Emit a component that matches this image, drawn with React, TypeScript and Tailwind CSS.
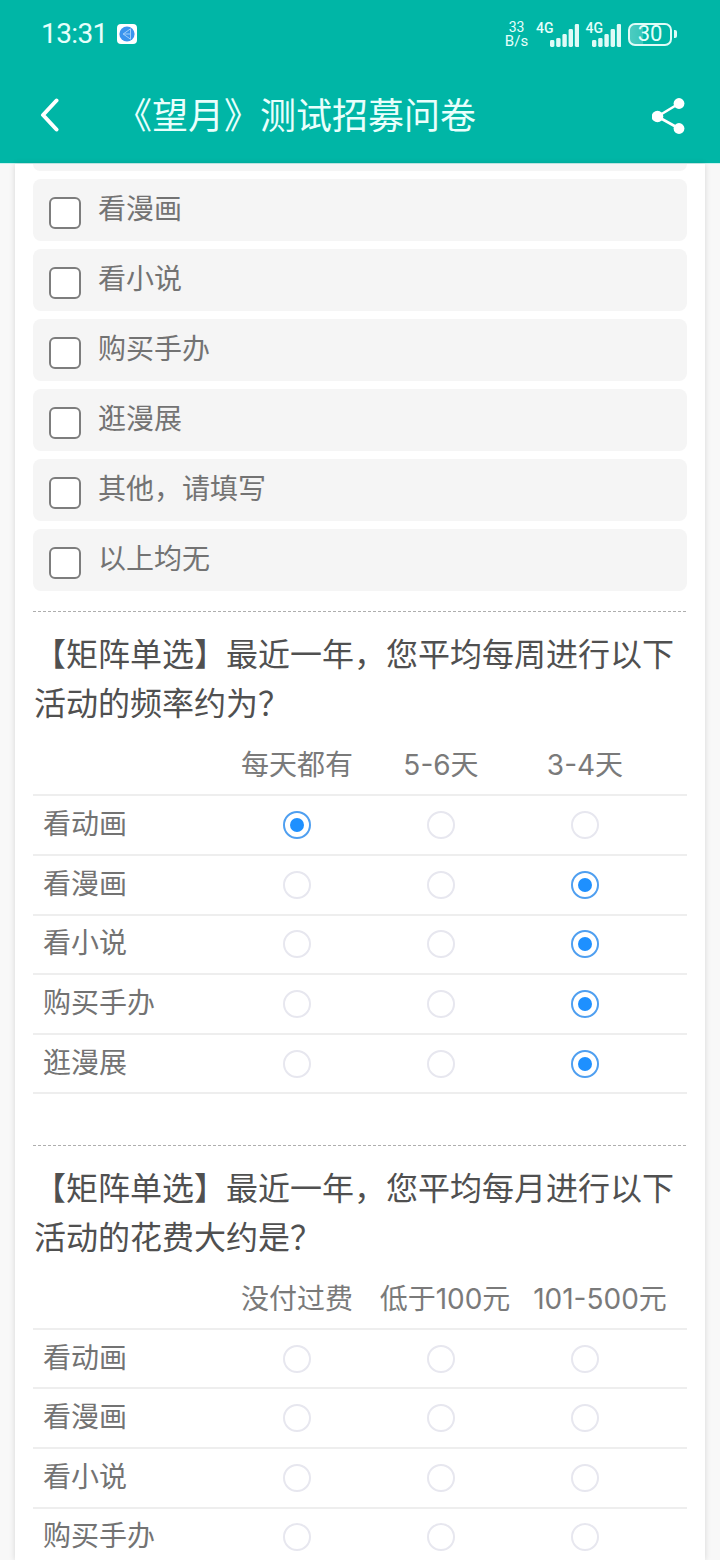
// App.tsx
const fontStack = "font-['Inter','Noto_Sans_CJK_SC','Noto_Sans',sans-serif]";

const options = ["看漫画", "看小说", "购买手办", "逛漫展", "其他，请填写", "以上均无"];

type Head = { text: string; className: string };

const weekHeads: Head[] = [
  { text: "每天都有", className: "col-start-2" },
  { text: "5-6天", className: "col-start-3" },
  { text: "3-4天", className: "col-start-4" },
];

const moneyHeads: Head[] = [
  { text: "没付过费", className: "col-start-2" },
  { text: "低于100元", className: "col-start-3 pl-[4px] -mr-[4px]" },
  { text: "101-500元", className: "col-start-4 col-span-2" },
];

function Signal() {
  const bars = [7, 9, 13, 18, 23];
  return (
    <svg width="29" height="23" viewBox="0 0 29 23" fill="#dffbf7">
      {bars.map((h, i) => (
        <rect key={i} x={i * 6.2} y={23 - h} width="4.4" height={h} rx="1.4" />
      ))}
    </svg>
  );
}

function AppDot() {
  return (
    <svg width="20" height="20" viewBox="0 0 20 20" className="ml-[9px]">
      <rect width="20" height="20" rx="4" fill="white" />
      <circle cx="10" cy="10" r="7.6" fill="#3b94ee" />
      <path d="M13.5 4.8 6.2 10l7.3 5.2zM6.2 10h7.3" fill="none" stroke="#a9d4fb" strokeWidth="0.9" />
    </svg>
  );
}

function StatusBar() {
  return (
    <div className="h-[68px] flex items-center pl-[41px] pr-[43px] text-[#e6fffb] font-['Roboto',sans-serif]">
      <span className="text-[28px] leading-none tracking-[-0.6px]">13:31</span>
      <AppDot />
      <div className="ml-auto flex items-center">
        <div className="w-[23px] flex flex-col items-center">
          <span className="text-[14px] leading-[14px]">33</span>
          <span className="text-[15px] leading-[14px]">B/s</span>
        </div>
        <div className="ml-[8px] flex items-end">
          <span className="text-[14px] leading-[14px] font-medium mb-[12px]">4G</span>
          <div className="-ml-[4px]">
            <Signal />
          </div>
        </div>
        <div className="ml-[7px] flex items-end">
          <span className="text-[14px] leading-[14px] font-medium mb-[12px]">4G</span>
          <div className="-ml-[11px]">
            <Signal />
          </div>
        </div>
        <div className="ml-[7px] w-[44px] h-[23px] rounded-[7px] border-2 border-[#dffbf7] flex items-center justify-center overflow-hidden bg-[linear-gradient(90deg,rgba(255,255,255,0.3)_0%,rgba(255,255,255,0.22)_32%,transparent_34%)]">
          <span className="text-[22px] leading-none">30</span>
        </div>
        <div className="ml-[2px] w-[3px] h-[8px] rounded-r-[2px] bg-[#dffbf7]" />
      </div>
    </div>
  );
}

function NavBar() {
  return (
    <div className="h-[95px] flex items-center">
      <svg className="ml-[40px] shrink-0 -mt-[1px]" width="19" height="34" viewBox="0 0 19 34" fill="none">
        <path d="M16.5 2.5 3 17l13.5 14.5" stroke="white" strokeWidth="4" strokeLinecap="round" strokeLinejoin="round" />
      </svg>
      <h1 className="ml-[57px] text-[36px] leading-none font-normal text-[#e9fffc]">《望月》测试招募问卷</h1>
      <svg className="ml-auto mr-[34px]" width="34" height="36" viewBox="0 0 34 36" fill="white">
        <circle cx="27" cy="5.5" r="5.4" />
        <circle cx="5.5" cy="18.5" r="5.8" />
        <circle cx="27" cy="30.5" r="5.4" />
        <path d="M5.5 18.5 27 5.5M5.5 18.5 27 30.5" stroke="white" strokeWidth="2.6" fill="none" />
      </svg>
    </div>
  );
}

function OptionRow({ label }: { label: string }) {
  return (
    <div className="h-[62px] rounded-[8px] bg-[#f5f5f5] flex items-center pl-[16px] gap-[17px]">
      <div className="w-[32px] h-[32px] mt-[5px] rounded-[6px] border-2 border-[#7d7d7d] bg-white" />
      <span className="text-[28px] leading-none text-[#737373] -mt-[3px]">{label}</span>
    </div>
  );
}

function Radio({ checked }: { checked?: boolean }) {
  if (checked) {
    return (
      <div className="w-[28px] h-[28px] rounded-full border-2 border-[#4f9ff0] bg-white flex items-center justify-center">
        <div className="w-[14px] h-[14px] rounded-full bg-[#1e90ff]" />
      </div>
    );
  }
  return <div className="w-[28px] h-[28px] rounded-full border-2 border-[#e7e7ef] bg-white" />;
}

function Matrix({
  title,
  heads,
  headHeight,
  rows,
}: {
  title: string;
  heads: Head[];
  headHeight: string;
  rows: { label: string; pick: number }[];
}) {
  return (
    <div>
      {/* dashed divider */}
      <div className="h-px bg-[repeating-linear-gradient(90deg,#aeaeae_0_3px,transparent_3px_5px)]" />
      <p className="pt-[18px] pr-[2px] pl-[1px] text-[32px] leading-[49px] text-[#505050]">{title}</p>
      <div className="mt-[7px]">
        <div className={`grid grid-cols-[192px_144px_144px_144px_30px] ${headHeight} items-center border-b-2 border-[#eeeeee]`}>
          {heads.map((h) => (
            <span key={h.text} className={`${h.className} row-start-1 text-center text-[28px] leading-none text-[#7a7a7a] whitespace-nowrap`}>
              {h.text}
            </span>
          ))}
        </div>
        {rows.map((r) => (
          <div
            key={r.label}
            className="grid grid-cols-[192px_144px_144px_144px_30px] h-[59.6px] items-center border-b-2 border-[#eeeeee]"
          >
            <span className="pl-[10px] text-[28px] leading-none text-[#737373] -mt-[2px]">{r.label}</span>
            {[0, 1, 2].map((i) => (
              <div key={i} className="flex justify-center">
                <Radio checked={r.pick === i} />
              </div>
            ))}
          </div>
        ))}
      </div>
    </div>
  );
}

export default function App() {
  return (
    <div className={`w-[720px] h-[1560px] overflow-hidden flex flex-col bg-[#f8f8f8] ${fontStack}`}>
      <header className="bg-[#00b6a6] shrink-0">
        <StatusBar />
        <NavBar />
      </header>
      <div className="h-px bg-[#c9f1ee] shrink-0" />

      <main className="flex-1 overflow-hidden mx-[15px] bg-white shadow-[0_0_6px_rgba(0,0,0,0.14)] px-[18px]">
        {/* option cut off by the header */}
        <div className="h-[7px] rounded-b-[8px] bg-[#f5f5f5]" />

        <div className="mt-[8px] flex flex-col gap-[8px]">
          {options.map((o) => (
            <OptionRow key={o} label={o} />
          ))}
        </div>

        <div className="mt-[20px]">
          <Matrix
            title="【矩阵单选】最近一年，您平均每周进行以下活动的频率约为？"
            heads={weekHeads}
            headHeight="h-[61.4px]"
            rows={[
              { label: "看动画", pick: 0 },
              { label: "看漫画", pick: 2 },
              { label: "看小说", pick: 2 },
              { label: "购买手办", pick: 2 },
              { label: "逛漫展", pick: 2 },
            ]}
          />
        </div>

        <div className="mt-[51px]">
          <Matrix
            title="【矩阵单选】最近一年，您平均每月进行以下活动的花费大约是？"
            heads={moneyHeads}
            headHeight="h-[60.4px]"
            rows={[
              { label: "看动画", pick: -1 },
              { label: "看漫画", pick: -1 },
              { label: "看小说", pick: -1 },
              { label: "购买手办", pick: -1 },
            ]}
          />
        </div>
      </main>
    </div>
  );
}
